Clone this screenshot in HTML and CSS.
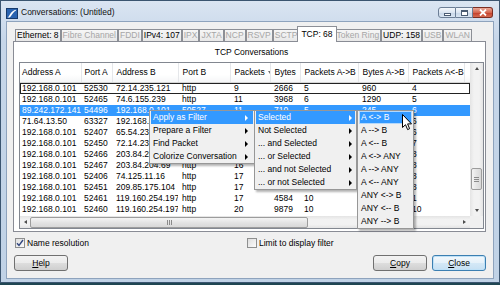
FILE: index.html
```html
<!DOCTYPE html>
<html lang="en">

<head>
  <meta charset="UTF-8">
  <meta name="viewport" content="width=device-width, initial-scale=1.0">
  <title>Conversations: (Untitled)</title>
  <link rel="stylesheet" href="styles.css">
</head>

<body>
  <div class="window">
    <div class="titlebar">
      <svg class="app-icon" width="12" height="11" viewBox="0 0 12 11">
        <rect x="0.5" y="0.5" width="11" height="10" fill="#2a63b0" stroke="#173a6c" />
        <path d="M1.5 9.5 C3.5 9 4.5 3 9.5 1.8 L10 2.8 C6.5 4 5.5 8.5 3.5 9.5 Z" fill="#fff" />
      </svg>
      <span class="title">Conversations: (Untitled)</span>
      <div class="caption">
        <span class="cap cap-min"><i></i></span>
        <span class="cap cap-max"><i></i></span>
        <span class="cap cap-close">
          <svg width="8" height="7" viewBox="0 0 8 7">
            <path d="M1 0.5 L7 6.5 M7 0.5 L1 6.5" stroke="#fff" stroke-width="1.8" />
          </svg>
        </span>
      </div>
    </div>

    <div class="client">
      <ul class="tabs">
        <li>Ethernet: 8</li>
        <li class="off">Fibre Channel</li>
        <li class="off">FDDI</li>
        <li>IPv4: 107</li>
        <li class="off">IPX</li>
        <li class="off">JXTA</li>
        <li class="off">NCP</li>
        <li class="off">RSVP</li>
        <li class="off">SCTP</li>
        <li class="active">TCP: 68</li>
        <li class="off">Token Ring</li>
        <li>UDP: 158</li>
        <li class="off">USB</li>
        <li class="off">WLAN</li>
      </ul>

      <div class="panel">
        <div class="panel-title">TCP Conversations</div>
        <div class="list">
          <div class="list-view">
            <table class="conv">
              <colgroup>
                <col class="c-addr-a">
                <col class="c-port-a">
                <col class="c-addr-b">
                <col class="c-port-b">
                <col class="c-pkts">
                <col class="c-bytes">
                <col class="c-pkts-ab">
                <col class="c-bytes-ab">
                <col class="c-pkts-ba">
                <col class="c-rest">
              </colgroup>
              <thead>
                <tr>
                  <th>Address A</th>
                  <th>Port A</th>
                  <th>Address B</th>
                  <th>Port B</th>
                  <th>Packets<span class="sort"></span></th>
                  <th>Bytes</th>
                  <th>Packets A-&gt;B</th>
                  <th>Bytes A-&gt;B</th>
                  <th>Packets A&lt;-B</th>
                  <th></th>
                </tr>
              </thead>
              <tbody>
                <tr class="focus">
                  <td>192.168.0.101</td><td>52530</td><td>72.14.235.121</td><td>http</td><td>9</td><td>2666</td><td>5</td><td>960</td><td>4</td><td></td>
                </tr>
                <tr>
                  <td>192.168.0.101</td><td>52465</td><td>74.6.155.239</td><td>http</td><td>11</td><td>3968</td><td>6</td><td>1290</td><td>5</td><td></td>
                </tr>
                <tr class="selected">
                  <td>89.242.172.141</td><td>54496</td><td>192.168.0.101</td><td>50527</td><td>11</td><td>710</td><td>5</td><td>245</td><td>6</td><td></td>
                </tr>
                <tr>
                  <td>71.64.13.50</td><td>63327</td><td>192.168.0.101</td><td>51264</td><td>12</td><td>1354</td><td>6</td><td>640</td><td>6</td><td></td>
                </tr>
                <tr>
                  <td>192.168.0.101</td><td>52407</td><td>65.54.239.80</td><td>http</td><td>13</td><td>4352</td><td>7</td><td>2340</td><td>6</td><td></td>
                </tr>
                <tr>
                  <td>192.168.0.101</td><td>52450</td><td>72.14.235.99</td><td>http</td><td>14</td><td>5127</td><td>7</td><td>1210</td><td>7</td><td></td>
                </tr>
                <tr>
                  <td>192.168.0.101</td><td>52466</td><td>203.84.204.69</td><td>http</td><td>16</td><td>4478</td><td>8</td><td>1654</td><td>8</td><td></td>
                </tr>
                <tr>
                  <td>192.168.0.101</td><td>52467</td><td>203.84.204.69</td><td>http</td><td>16</td><td>4421</td><td>8</td><td>1598</td><td>8</td><td></td>
                </tr>
                <tr>
                  <td>192.168.0.101</td><td>52406</td><td>74.125.11.16</td><td>http</td><td>17</td><td>6232</td><td>9</td><td>1894</td><td>8</td><td></td>
                </tr>
                <tr>
                  <td>192.168.0.101</td><td>52451</td><td>209.85.175.104</td><td>http</td><td>17</td><td>7340</td><td>9</td><td>2013</td><td>8</td><td></td>
                </tr>
                <tr>
                  <td>192.168.0.101</td><td>52461</td><td>119.160.254.197</td><td>http</td><td>17</td><td>4584</td><td>10</td><td>2133</td><td>1</td><td></td>
                </tr>
                <tr>
                  <td>192.168.0.101</td><td>52460</td><td>119.160.254.197</td><td>http</td><td>20</td><td>9879</td><td>10</td><td>2867</td><td>10</td><td></td>
                </tr>
              </tbody>
            </table>
          </div>

          <div class="vscroll">
            <span class="arr arr-up"></span>
            <span class="vthumb"><i class="grip"></i></span>
            <span class="arr arr-down"></span>
          </div>

          <div class="hscroll">
            <span class="arr arr-left"></span>
            <span class="hthumb"><i class="grip"></i></span>
            <span class="arr arr-right"></span>
          </div>

          <div class="corner"></div>
        </div>
      </div>

      <div class="options">
        <label class="check">
          <span class="box">
            <svg width="8" height="8" viewBox="0 0 8 8">
              <path d="M1 4.2 L3 6.5 L7 1" fill="none" stroke="#33477f" stroke-width="1.4" />
            </svg>
          </span>
          Name resolution
        </label>
        <label class="check">
          <span class="box"></span>
          Limit to display filter
        </label>
      </div>

      <div class="buttons">
        <button class="btn"><u>H</u>elp</button>
        <span class="spacer"></span>
        <button class="btn"><u>C</u>opy</button>
        <button class="btn btn-default"><u>C</u>lose</button>
      </div>
    </div>

    <!-- popup menus over the list -->
    <ul class="menu menu-main">
      <li class="hl">Apply as Filter<i class="arrow"></i></li>
      <li>Prepare a Filter<i class="arrow"></i></li>
      <li>Find Packet<i class="arrow"></i></li>
      <li>Colorize Conversation<i class="arrow"></i></li>
    </ul>

    <ul class="menu menu-sub">
      <li class="hl">Selected<i class="arrow"></i></li>
      <li>Not Selected<i class="arrow"></i></li>
      <li>... and Selected<i class="arrow"></i></li>
      <li>... or Selected<i class="arrow"></i></li>
      <li>... and not Selected<i class="arrow"></i></li>
      <li>... or not Selected<i class="arrow"></i></li>
    </ul>

    <ul class="menu menu-dir">
      <li class="hl hl-box">A &lt;-&gt; B</li>
      <li>A --&gt; B</li>
      <li>A &lt;-- B</li>
      <li>A &lt;-&gt; ANY</li>
      <li>A --&gt; ANY</li>
      <li>A &lt;-- ANY</li>
      <li>ANY &lt;-&gt; B</li>
      <li>ANY &lt;-- B</li>
      <li>ANY --&gt; B</li>
    </ul>

    <svg class="cursor" width="11" height="17" viewBox="0 0 11 17">
      <path d="M0.5 0.5 L0.5 13.5 L3.5 10.7 L5.6 15.6 L7.6 14.7 L5.6 9.9 L9.5 9.9 Z" fill="#fff" stroke="#000" stroke-width="1" stroke-linejoin="round" />
    </svg>
  </div>
</body>

</html>
```

FILE: styles.css
```css
* {
  box-sizing: border-box;
}

html,
body {
  margin: 0;
  padding: 0;
}

body {
  width: 500px;
  height: 285px;
  overflow: hidden;
  background: #1f4652;
  font-family: "Liberation Sans", Arial, sans-serif;
  font-size: 8.5px;
  color: #000;
}

.window {
  position: relative;
  display: flex;
  flex-direction: column;
  width: 500px;
  height: 283px;
  border: 1px solid #3b5570;
  background: linear-gradient(#dae5f2, #c6d6e9 40px, #c0d2e6);
}

/* title bar */
.titlebar {
  display: flex;
  align-items: flex-start;
  height: 20px;
  padding-left: 5px;
}

.app-icon {
  margin-top: 7px;
}

.title {
  margin-left: 3px;
  line-height: 22px;
  color: #111;
}

.caption {
  display: flex;
  margin: 6px 6px 0 auto;
}

.cap {
  display: flex;
  align-items: center;
  justify-content: center;
  height: 11px;
  border: 1px solid #6c7e96;
  background: linear-gradient(#f4f7fb, #dbe5f1 50%, #c6d5e7 51%, #d9e5f2);
}

.cap-min {
  width: 18px;
  border-radius: 3px 0 0 3px;
}

.cap-min i {
  width: 7px;
  height: 3px;
  margin-top: 3px;
  border: 1px solid #4a5b72;
  background: #fff;
}

.cap-max {
  width: 17px;
  border-left: 0;
}

.cap-max i {
  width: 7px;
  height: 6px;
  border: 1px solid #4a5b72;
  border-top-width: 2px;
  background: #fff;
}

.cap-close {
  width: 20px;
  border-left: 0;
  border-color: #7b2d22;
  border-radius: 0 3px 3px 0;
  background: linear-gradient(#eaa898, #d4664f 50%, #c13b28 51%, #d66c52);
}

/* client area */
.client {
  flex: 1;
  margin: 0 5px 3px;
  padding: 0 7px 7px 6px;
  border: 1px solid #8ea3bd;
  background: #f0f0f0;
}

.tabs {
  display: flex;
  align-items: flex-end;
  height: 19px;
  margin: 0;
  padding: 4px 0 0 2px;
  list-style: none;
}

.tabs li {
  height: 12px;
  padding: 0 1px;
  line-height: 11px;
  white-space: nowrap;
  border: 1px solid #8c8f96;
  border-bottom: 0;
  background: linear-gradient(#f6f6f6, #e8e8e8);
  color: #000;
}

.tabs li.off {
  color: #a6a6a6;
}

.tabs li.active {
  position: relative;
  z-index: 1;
  height: 16px;
  margin: 0 -2px -1px;
  padding: 0 3px;
  line-height: 14px;
  background: #fff;
}

.panel {
  height: 191px;
  padding: 0 1px 2px 5px;
  border: 1px solid #898c95;
  background: #fff;
}

.panel-title {
  height: 20px;
  line-height: 20px;
  text-align: center;
}

/* list view */
.list {
  display: grid;
  grid-template-columns: 1fr 13px;
  grid-template-rows: 153px 12px;
  height: 167px;
  border: 1px solid #828790;
}

.list-view {
  overflow: hidden;
  background: #fff;
}

.conv {
  width: 450px;
  border-collapse: collapse;
  table-layout: fixed;
}

.c-addr-a { width: 61px; }
.c-port-a { width: 31px; }
.c-addr-b { width: 66px; }
.c-port-b { width: 52px; }
.c-pkts { width: 40px; }
.c-bytes { width: 30px; }
.c-pkts-ab { width: 58px; }
.c-bytes-ab { width: 50px; }
.c-pkts-ba { width: 56px; }
.c-rest { width: 6px; }

.conv th {
  height: 19px;
  padding: 0 0 0 4px;
  font-weight: normal;
  text-align: left;
  white-space: nowrap;
  overflow: hidden;
  border-right: 1px solid #e5e7ea;
  border-bottom: 1px solid #d5d5d5;
  background: linear-gradient(#fff, #fff 60%, #f5f6f7);
}

.conv th:first-child,
.conv td:first-child {
  padding-left: 2px;
}

.conv th:nth-child(2),
.conv td:nth-child(2) {
  padding-left: 3px;
}

.sort {
  display: inline-block;
  margin: 0 0 1px 3px;
  border-top: 3px solid #6d6d6d;
  border-left: 2.5px solid transparent;
  border-right: 2.5px solid transparent;
}

.conv td {
  height: 11px;
  padding: 0 0 0 4px;
  line-height: 11px;
  white-space: nowrap;
  overflow: hidden;
}

.conv tr.focus td {
  box-shadow: inset 0 1px #222, inset 0 -1px #222;
}

.conv tr.focus td:first-child {
  box-shadow: inset 0 1px #222, inset 0 -1px #222, inset 1px 0 #222;
}

.conv tr.focus td:last-child {
  box-shadow: inset 0 1px #222, inset 0 -1px #222, inset -1px 0 #222;
}

.conv tr.selected td {
  background: #3399ff;
  color: #fff;
}

/* scroll bars */
.vscroll {
  display: flex;
  flex-direction: column;
  align-items: center;
  background: linear-gradient(90deg, #e4e4e4, #f2f2f2 30%, #f2f2f2 70%, #e4e4e4);
}

.hscroll {
  display: flex;
  align-items: center;
  background: linear-gradient(#e4e4e4, #f2f2f2 30%, #f2f2f2 70%, #e4e4e4);
}

.corner {
  background: #f0f0f0;
}

.arr {
  display: flex;
  align-items: center;
  justify-content: center;
}

.arr::before {
  content: "";
  border: 2.5px solid transparent;
}

.arr-up,
.arr-down {
  width: 13px;
  height: 12px;
}

.arr-up::before {
  border-bottom: 3px solid #4d4d4d;
  border-top-width: 0;
  margin-top: -1px;
}

.arr-down {
  margin-top: auto;
}

.arr-down::before {
  border-top: 3px solid #4d4d4d;
  border-bottom-width: 0;
}

.arr-left,
.arr-right {
  width: 10px;
  height: 12px;
}

.arr-left::before {
  border-right: 3px solid #4d4d4d;
  border-left-width: 0;
}

.arr-right {
  width: 12px;
  margin-left: auto;
}

.arr-right::before {
  border-left: 3px solid #4d4d4d;
  border-right-width: 0;
}

.vthumb,
.hthumb {
  display: flex;
  align-items: center;
  justify-content: center;
  border: 1px solid #9c9c9c;
  border-radius: 2px;
}

.vthumb {
  width: 11px;
  height: 22px;
  margin-top: 93px;
  background: linear-gradient(90deg, #f4f4f4, #e4e4e4 50%, #d8d8d8);
}

.hthumb {
  width: 278px;
  height: 11px;
  background: linear-gradient(#f4f4f4, #e4e4e4 50%, #d8d8d8);
}

.vthumb .grip {
  width: 5px;
  height: 5px;
  background: repeating-linear-gradient(#8a8a8a 0 1px, transparent 1px 2px);
}

.hthumb .grip {
  width: 5px;
  height: 5px;
  background: repeating-linear-gradient(90deg, #8a8a8a 0 1px, transparent 1px 2px);
}

/* options and buttons */
.options {
  display: grid;
  grid-template-columns: 232px 1fr;
  height: 12px;
  margin-top: 5px;
  padding-left: 2px;
}

.check {
  display: flex;
  align-items: center;
  gap: 2px;
  line-height: 12px;
}

.box {
  display: flex;
  align-items: center;
  justify-content: center;
  width: 10px;
  height: 10px;
  border: 1px solid #8e8f8f;
  background: linear-gradient(135deg, #dedede, #fbfbfb);
}

.buttons {
  display: flex;
  gap: 5px;
  margin-top: 6px;
  padding-left: 1px;
}

.spacer {
  flex: 1;
}

.btn {
  width: 54px;
  height: 16px;
  padding: 0;
  font: inherit;
  line-height: 14px;
  color: #000;
  border: 1px solid #707070;
  border-radius: 3px;
  background: linear-gradient(#f3f3f3, #ebebeb 48%, #dddddd 52%, #cfcfcf);
}

.btn-default {
  border-color: #3c7fb1;
  box-shadow: inset 0 0 0 1px #bfe1f7;
  background: linear-gradient(#f2f8fc, #e6f1f9 48%, #d4e8f6 52%, #c6e0f3);
}

/* popup menus */
.menu {
  position: absolute;
  top: 109px;
  z-index: 5;
  margin: 0;
  padding: 0 1px;
  list-style: none;
  border: 1px solid #979797;
  background: #f0f0f0;
  box-shadow: 2px 2px 2px rgba(0, 0, 0, 0.3);
}

.menu li {
  display: flex;
  align-items: center;
  justify-content: space-between;
  height: 13px;
  padding: 0 5px 0 2px;
  line-height: 13px;
  white-space: nowrap;
}

.menu li.hl {
  background: #3399ff;
  color: #fff;
}

.menu li.hl-box {
  box-shadow: inset 0 0 0 1px #b4d8fb;
}

.arrow {
  border-left: 3px solid currentColor;
  border-top: 3px solid transparent;
  border-bottom: 3px solid transparent;
}

.menu-main {
  left: 148px;
  width: 106px;
}

.menu-sub {
  left: 253px;
  width: 103px;
  z-index: 6;
}

.menu-sub li {
  padding-right: 3px;
}

.menu-dir {
  left: 356px;
  width: 57px;
  z-index: 7;
}

.cursor {
  position: absolute;
  left: 401px;
  top: 113px;
  z-index: 9;
}
```
